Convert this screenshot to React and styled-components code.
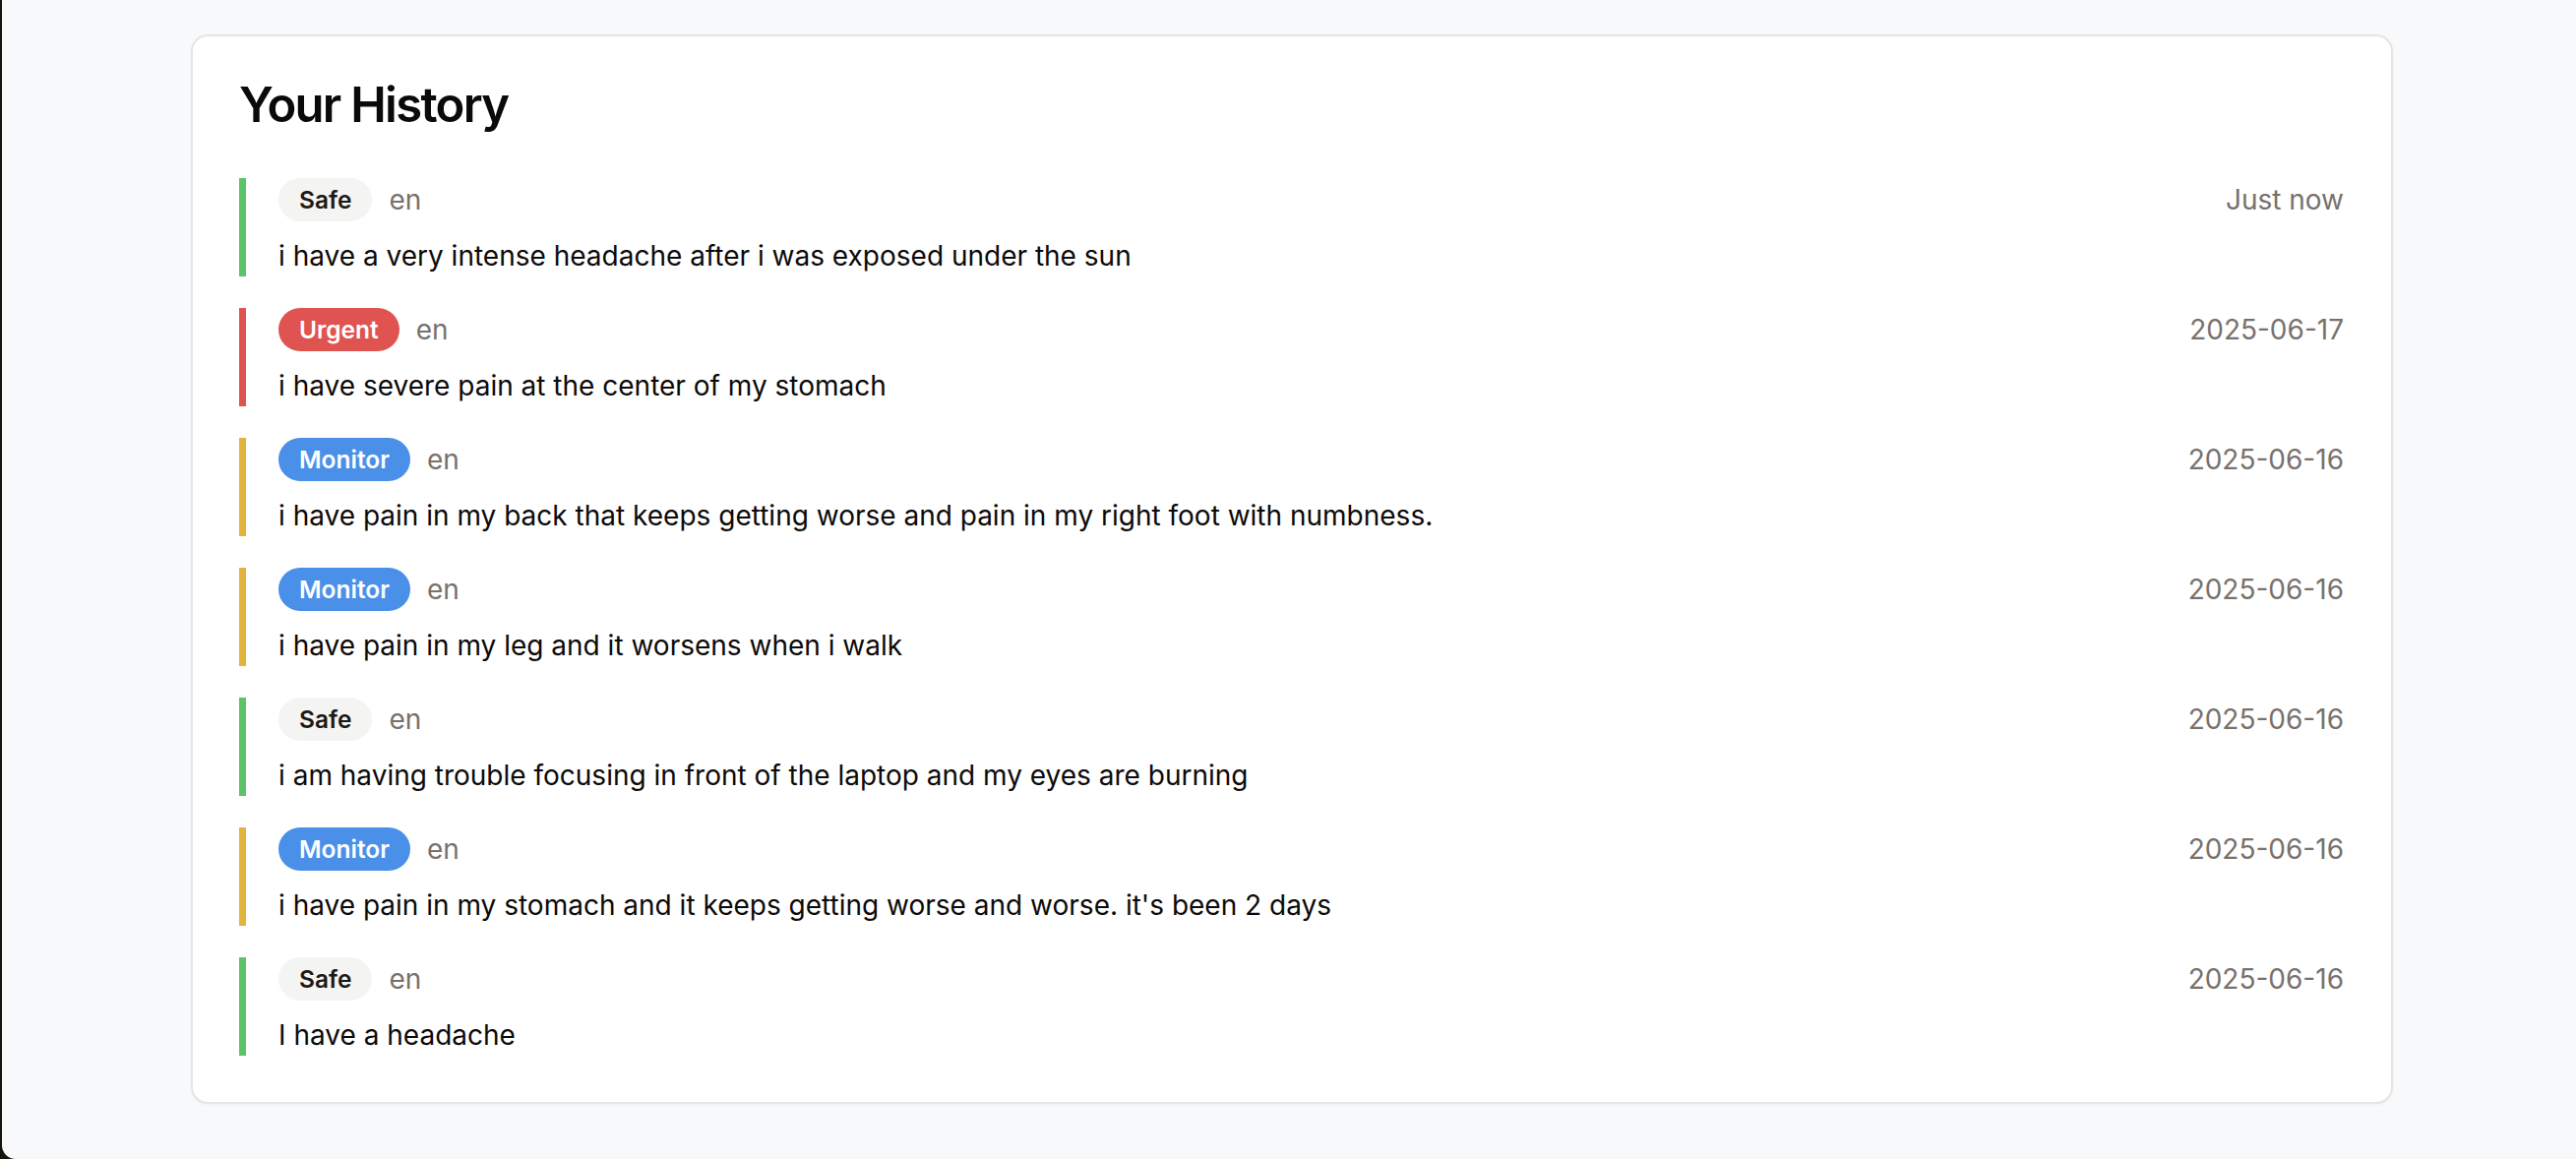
import React from "react";
import styled, { createGlobalStyle } from "styled-components";

const GlobalStyle = createGlobalStyle`
  html {
    background: #14140c;
  }
  body {
    margin: 0 0 0 2px;
    min-height: 1178px;
    background: #f8f9fb;
    border-bottom-left-radius: 14px;
    font-family: Inter, "Noto Sans", "Liberation Sans", sans-serif;
    color: #0c0a09;
  }
  * { box-sizing: border-box; }
`;

const Page = styled.div`
  padding: 35px 186px 40px 192px;
`;

const Card = styled.section`
  background: #ffffff;
  border: 2px solid #e7e5e4;
  border-radius: 17px;
  padding: 40px 48px 47px 47px;
  box-shadow: 0 1px 3px rgba(0, 0, 0, 0.04);
`;

const Title = styled.h2`
  margin: 0 0 45px;
  font-size: 49px;
  line-height: 59px;
  font-weight: 600;
  letter-spacing: -1.7px;
  color: #0c0a09;
`;

const List = styled.div`
  display: flex;
  flex-direction: column;
  gap: 32px;
`;

const Entry = styled.article`
  display: flex;
  flex-direction: column;
  gap: 14px;
  border-left: 7px solid ${(p) => p.$accent};
  padding-left: 33px;
  min-height: 100px;
`;

const Meta = styled.div`
  display: flex;
  align-items: center;
  gap: 17px;
  height: 44px;
`;

const Badge = styled.span`
  display: inline-flex;
  align-items: center;
  height: 44px;
  padding: 0 21px;
  border-radius: 999px;
  font-size: 24.5px;
  font-weight: 600;
  background: ${(p) => p.$bg};
  color: ${(p) => p.$fg};
`;

const Lang = styled.span`
  font-size: 28px;
  color: #78716c;
`;

const Time = styled.span`
  margin-left: auto;
  font-size: 28px;
  color: #78716c;
`;

const Text = styled.p`
  margin: 0;
  font-size: 28px;
  line-height: 42px;
  color: #0c0a09;
`;

const LEVELS = {
  Safe: { accent: "#5dc36b", bg: "#f4f4f3", fg: "#1c1917" },
  Urgent: { accent: "#df5450", bg: "#df5450", fg: "#ffffff" },
  Monitor: { accent: "#e2b43e", bg: "#4a90e8", fg: "#ffffff" },
};

const items = [
  { level: "Safe", time: "Just now", text: "i have a very intense headache after i was exposed under the sun" },
  { level: "Urgent", time: "2025-06-17", text: "i have severe pain at the center of my stomach" },
  { level: "Monitor", time: "2025-06-16", text: "i have pain in my back that keeps getting worse and pain in my right foot with numbness." },
  { level: "Monitor", time: "2025-06-16", text: "i have pain in my leg and it worsens when i walk" },
  { level: "Safe", time: "2025-06-16", text: "i am having trouble focusing in front of the laptop and my eyes are burning" },
  { level: "Monitor", time: "2025-06-16", text: "i have pain in my stomach and it keeps getting worse and worse. it's been 2 days" },
  { level: "Safe", time: "2025-06-16", text: "I have a headache" },
];

export default function App() {
  return (
    <>
      <GlobalStyle />
      <Page>
        <Card>
          <Title>Your History</Title>
          <List>
            {items.map((it, i) => {
              const lv = LEVELS[it.level];
              return (
                <Entry key={i} $accent={lv.accent}>
                  <Meta>
                    <Badge $bg={lv.bg} $fg={lv.fg}>{it.level}</Badge>
                    <Lang>en</Lang>
                    <Time>{it.time}</Time>
                  </Meta>
                  <Text>{it.text}</Text>
                </Entry>
              );
            })}
          </List>
        </Card>
      </Page>
    </>
  );
}
